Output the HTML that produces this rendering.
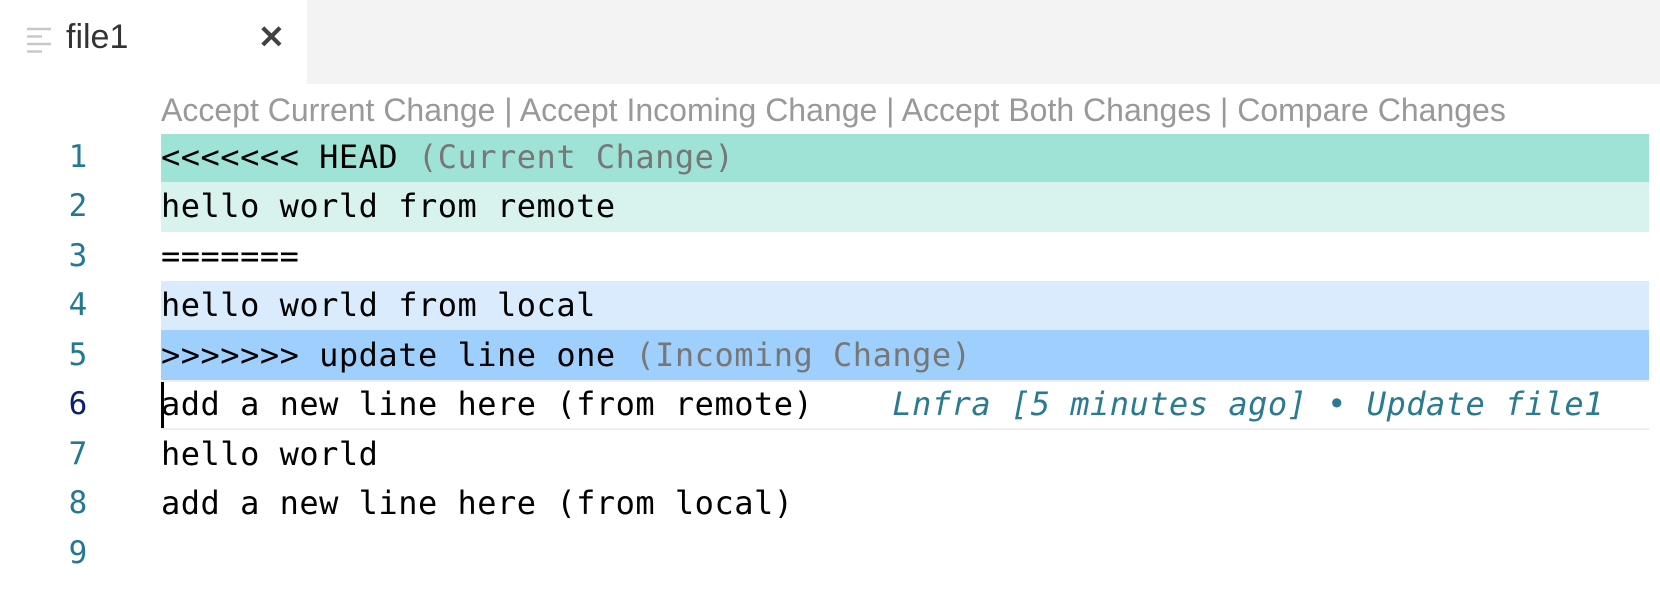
<!DOCTYPE html>
<html><head><style>
body{margin:0;width:1660px;height:590px;background:#fff;overflow:hidden;position:relative;font-family:"Liberation Sans",sans-serif}
.tabbar{position:absolute;left:0;top:0;width:1660px;height:84px;background:#f3f3f3}
.tab{position:absolute;left:0;top:0;width:307px;height:84px;background:#fff}
.tab .name{position:absolute;left:66px;top:18px;font-size:34px;color:#333}
.tab .x{position:absolute;left:258px;top:18px;font-size:32px;font-weight:bold;color:#424242}
.lens{position:absolute;left:161px;top:91px;font-size:32px;line-height:38px;color:#999;white-space:pre}
.band{position:absolute;left:161px;width:1488px}
.ln{position:absolute;left:48px;width:60px;text-align:center;font-family:"DejaVu Sans Mono",monospace;font-size:31px;line-height:49.5px;color:#237893}
.code{position:absolute;left:161px;font-family:"DejaVu Sans Mono",monospace;font-size:32px;line-height:49.5px;letter-spacing:0.5px;white-space:pre;color:#000}
.g{color:#777}
</style></head><body>
<div class="tabbar"><div class="tab">
<svg style="position:absolute;left:27px;top:27px" width="24" height="26"><g stroke="#c8c8c8" stroke-width="2.5"><line x1="0" y1="2" x2="24" y2="2"/><line x1="0" y1="9.5" x2="15" y2="9.5"/><line x1="0" y1="17" x2="24" y2="17"/><line x1="0" y1="24.5" x2="15" y2="24.5"/></g></svg>
<div class="name">file1</div><div class="x">✕</div></div></div>
<div class="lens">Accept Current Change | Accept Incoming Change | Accept Both Changes | Compare Changes</div>
<div class="band" style="top:134px;height:48px;background:#9fe3d6"></div>
<div class="band" style="top:182px;height:50px;background:#d8f3ee"></div>
<div class="band" style="top:281px;height:49px;background:#d9ebfd"></div>
<div class="band" style="top:330px;height:50px;background:#9fd0fd"></div>
<div class="band" style="top:380px;height:50px;border-top:2px solid #eee;border-bottom:2px solid #eee;box-sizing:border-box"></div>
<div style="position:absolute;left:161px;top:382px;width:3px;height:46px;background:#000"></div>
<div class="ln" style="top:133px">1</div>
<div class="ln" style="top:182px">2</div>
<div class="ln" style="top:232px">3</div>
<div class="ln" style="top:281px">4</div>
<div class="ln" style="top:331px">5</div>
<div class="ln" style="top:380px;color:#0b216f">6</div>
<div class="ln" style="top:430px">7</div>
<div class="ln" style="top:479px">8</div>
<div class="ln" style="top:529px">9</div>
<div class="code" style="top:133px">&lt;&lt;&lt;&lt;&lt;&lt;&lt; HEAD <span class="g">(Current Change)</span></div>
<div class="code" style="top:182px">hello world from remote</div>
<div class="code" style="top:232px">=======</div>
<div class="code" style="top:281px">hello world from local</div>
<div class="code" style="top:331px">&gt;&gt;&gt;&gt;&gt;&gt;&gt; update line one <span class="g">(Incoming Change)</span></div>
<div class="code" style="top:380px">add a new line here (from remote)    <i style="color:#2a7a90">Lnfra [5 minutes ago] • Update file1</i></div>
<div class="code" style="top:430px">hello world</div>
<div class="code" style="top:479px">add a new line here (from local)</div>
</body></html>
